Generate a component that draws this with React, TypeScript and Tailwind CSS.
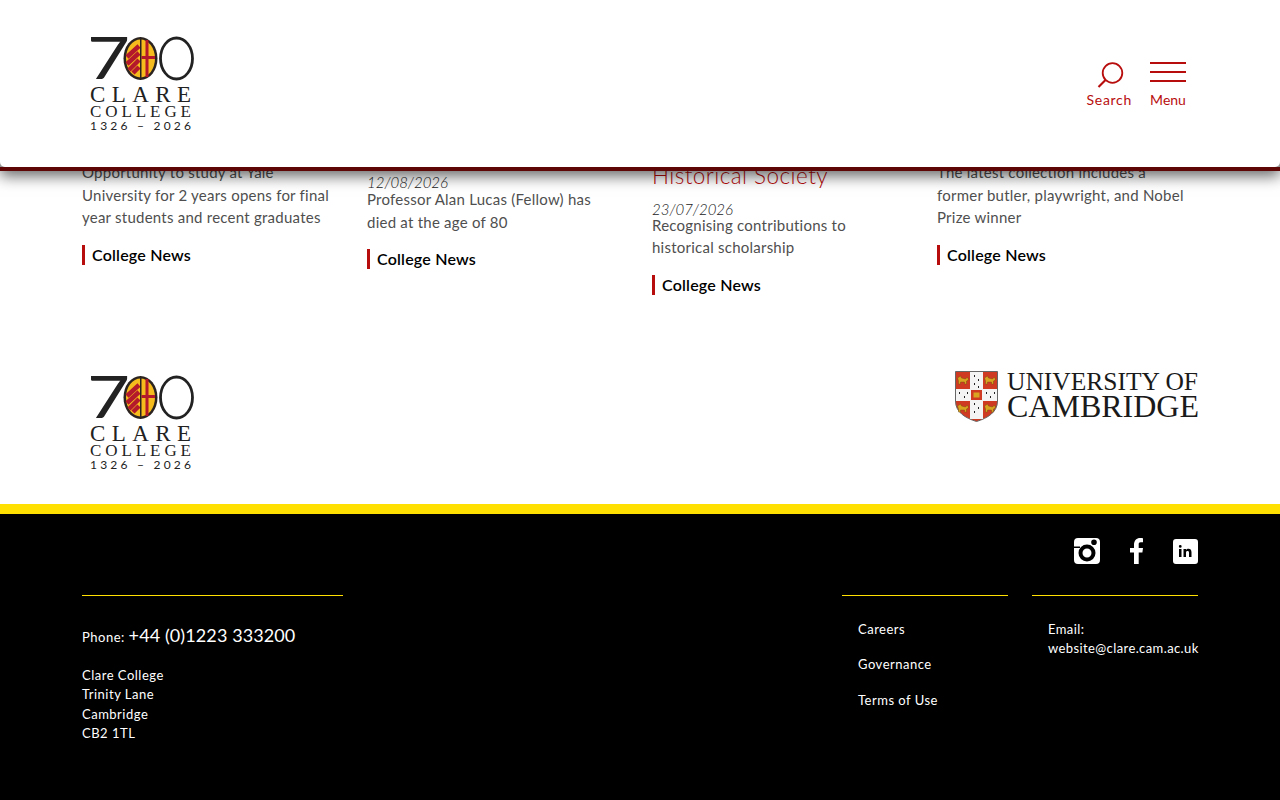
import React from 'react';

const sans = { fontFamily: '"Lato", "Open Sans", sans-serif' };

const news = [
  { title: '', date: '', text: ['Opportunity to study at Yale', 'University for 2 years opens for final', 'year students and recent graduates'], top: 'pt-[162px]' },
  { title: '', date: '12/08/2026', text: ['Professor Alan Lucas (Fellow) has', 'died at the age of 80'], top: 'pt-[175px]' },
  { title: 'Historical Society', date: '23/07/2026', text: ['Recognising contributions to', 'historical scholarship'], top: 'pt-[161px]' },
  { title: '', date: '', text: ['The latest collection includes a', 'former butler, playwright, and Nobel', 'Prize winner'], top: 'pt-[162px]' },
];

const ClareLogo: React.FC = () => (
  <svg width="104" height="94" viewBox="0 0 104 94" className="overflow-visible">
    <text x="0" y="41.500" fontSize="58" fontFamily="Lato" fontWeight="400" fill="#222" transform="translate(-3 0) scale(1.28 1)">7</text>
    <ellipse cx="86.500" cy="21.500" rx="16" ry="20.500" fill="none" stroke="#222" strokeWidth="2.800" />
    <ellipse cx="50.500" cy="21.500" rx="17" ry="21.500" fill="#2a2320" />
    <ellipse cx="50.500" cy="21.500" rx="14.500" ry="19" fill="#f6bb1d" />
    <path d="M37 20 L49 9 M37 27 L49 16 M39 33 L49 23 M43 36 L49 30" stroke="#b3182b" strokeWidth="4.500" fill="none" />
    <rect x="50" y="2" width="1.500" height="39" fill="#2a2320" />
    <rect x="55.500" y="3" width="3" height="37" fill="#b3182b" />
    <rect x="51.500" y="19" width="13.500" height="3" fill="#b3182b" />
    <text x="0" y="65" fontSize="23" fontFamily="Liberation Serif" fill="#222" textLength="101" lengthAdjust="spacing">CLARE</text>
    <text x="0" y="80" fontSize="17" fontFamily="Liberation Serif" fill="#222" textLength="101" lengthAdjust="spacing">COLLEGE</text>
    <text x="0" y="93" fontSize="12" fontFamily="Lato" fontWeight="400" fill="#222" textLength="101" lengthAdjust="spacing">1326 – 2026</text>
  </svg>
);

const lion = 'M1 3 L4 1 L5 3 L9 4 L11 2 L12 5 L10 6 L10 9 L8 9 L8 7 L4 7 L4 9 L2 9 L2 6 Z';

const CambridgeLogo: React.FC = () => (
  <div className="flex items-start gap-[9px]">
    <svg width="43" height="51" viewBox="0 0 43 51">
      <path d="M0.500 0.500 H42.500 V30 C42.500 41 33 47 21.500 50.500 C10 47 0.500 41 0.500 30Z" fill="#cf3a22" stroke="#666" />
      <rect x="15" y="1" width="13" height="47" fill="#f4f4f4" />
      <rect x="1" y="18" width="41" height="12" fill="#f4f4f4" />
      <path d={lion} fill="#d9a520" stroke="#6b4a10" strokeWidth="0.400" transform="translate(1.500 4)" />
      <path d={lion} fill="#d9a520" stroke="#6b4a10" strokeWidth="0.400" transform="translate(28.500 4)" />
      <path d={lion} fill="#d9a520" stroke="#6b4a10" strokeWidth="0.400" transform="translate(1.500 32)" />
      <path d={lion} fill="#d9a520" stroke="#6b4a10" strokeWidth="0.400" transform="translate(28.500 32)" />
      <rect x="16" y="19" width="11" height="10" fill="#cf3a22" />
      <rect x="18.500" y="21.500" width="6" height="5" fill="#d9a520" />
      <path d="M19 4h1v2h-1zM23 8h1v2h-1zM19 12h1v2h-1zM23 15h1v2h-1zM4 21h1v2H4zM9 25h1v2H9zM12 21h1v2h-1zM31 21h1v2h-1zM35 25h1v2h-1zM39 21h1v2h-1zM19 32h1v2h-1zM23 36h1v2h-1zM19 40h1v2h-1z" fill="#222" />
    </svg>
    <div className="text-[#1a1a1a]" style={{ fontFamily: '"Liberation Serif", serif' }}>
      <div className="whitespace-nowrap text-[25.5px] leading-[22px]">UNIVERSITY OF</div>
      <div className="whitespace-nowrap text-[32px] leading-[26px]">CAMBRIDGE</div>
    </div>
  </div>
);

const App: React.FC = () => {
  return (
    <div className="relative h-[800px] w-[1280px] overflow-hidden bg-white" style={sans}>
      {/* Fixed header */}
      <header className="absolute left-0 right-0 top-0 z-10 bg-[#999] shadow-[0_5px_14px_rgba(0,0,0,0.6)]">
        <div className="flex h-[167px] items-start justify-between rounded-b-[5px] bg-white pl-[90px] pr-[94px] pt-[37px]">
          <ClareLogo />
          <div className="mt-[25px] flex gap-[18px] text-sm text-[#b80d0d]">
            <div className="flex flex-col items-center">
              <svg width="27" height="27" viewBox="0 0 27 27" fill="none" stroke="#b80d0d" className="ml-[2px]">
                <circle cx="15.500" cy="11" r="9.800" strokeWidth="1.800" />
                <path d="M8.500 18 L1.500 25" strokeWidth="2.200" />
              </svg>
              <span className="mt-px leading-5 tracking-[0.7px]">Search</span>
            </div>
            <div className="flex flex-col items-center">
              <div className="flex h-[20px] w-[36px] flex-col justify-between">
                <div className="h-[2px] bg-[#b80d0d]" />
                <div className="h-[2px] bg-[#b80d0d]" />
                <div className="h-[2px] bg-[#b80d0d]" />
              </div>
              <span className="mt-[8px] leading-5">Menu</span>
            </div>
          </div>
        </div>
        <div className="h-[4px] bg-[#5e0505]" />
      </header>

      {/* News row */}
      <section className="grid h-[339px] grid-cols-4 gap-[24px] px-[82px]">
        {news.map((item) => (
          <div key={item.text[0]} className={item.top}>
            {item.title && <h3 className="text-[22.5px] font-light leading-[30px] tracking-[0.45px] text-[#b80d0d]">{item.title}</h3>}
            {item.date && <div className={`text-[15px] font-light italic leading-[14px] text-[#222] ${item.title ? '-mb-[2.5px] mt-[11px]' : ''}`}>{item.date}</div>}
            <p className="-mt-px text-[15px] leading-[22.6px] tracking-[0.24px] text-[#4f4f4f]">
              {item.text.map((line) => (
                <span key={line} className="block whitespace-nowrap">{line}</span>
              ))}
            </p>
            <div className="mt-[16px] border-l-[3px] border-[#b80d0d] pl-[7px] text-[16px] font-semibold leading-[20px] tracking-[0.2px] text-black">College News</div>
          </div>
        ))}
      </section>

      {/* Logos */}
      <section className="flex h-[165px] items-start justify-between pl-[90px] pr-[81px] pt-[37px]">
        <ClareLogo />
        <div className="-mt-[5px]">
          <CambridgeLogo />
        </div>
      </section>

      {/* Footer */}
      <footer className="h-[296px] border-t-[10px] border-[#ffe000] bg-black px-[82px] pt-[24px] text-white">
        <div className="flex h-[26px] items-center justify-end gap-[26px]">
          <svg width="26" height="26" viewBox="0 0 26 26">
            <path fillRule="evenodd" d="M4 0H22A4 4 0 0 1 26 4V22A4 4 0 0 1 22 26H4A4 4 0 0 1 0 22V4A4 4 0 0 1 4 0ZM0 8.500V10H6V8.500ZM13 6.500A8.500 8.500 0 1 0 13 23.500A8.500 8.500 0 1 0 13 6.500ZM13 10.500A4.500 4.500 0 1 1 13 19.500A4.500 4.500 0 1 1 13 10.500ZM20 1.500A2.800 2.800 0 1 0 20 7.100A2.800 2.800 0 1 0 20 1.500Z" fill="#fff" />
          </svg>
          <svg width="21" height="26" viewBox="0 0 21 26">
            <path d="M8 26V14.500H4V10H8V6.800C8 2.500 10.500 0 14.200 0C15.500 0 16.600 0.100 17 0.200V4.300H14.800C13 4.300 12.700 5.200 12.700 6.500V10H17L16.400 14.500H12.700V26Z" fill="#fff" />
          </svg>
          <svg width="25" height="25" viewBox="0 0 25 25">
            <path fillRule="evenodd" d="M3 0H22A3 3 0 0 1 25 3V22A3 3 0 0 1 22 25H3A3 3 0 0 1 0 22V3A3 3 0 0 1 3 0ZM6 10V18H8.500V10ZM7.250 6A1.400 1.400 0 1 0 7.250 8.800A1.400 1.400 0 1 0 7.250 6ZM10.500 10V18H13V13.800C13 12.500 13.500 11.900 14.500 11.900C15.500 11.900 16 12.500 16 13.800V18H18.500V13.200C18.500 10.900 17.300 9.800 15.600 9.800C14.400 9.800 13.500 10.300 13 11.100V10Z" fill="#fff" />
          </svg>
        </div>

        <div className="mt-[31px] flex justify-between text-[13px] tracking-[0.5px]">
          <div className="w-[261px] border-t border-[#ffe000] pt-[24px]">
            <div className="flex items-baseline leading-[30px]">
              <span>Phone:&nbsp;</span>
              <span className="text-[18px] tracking-[0.1px]">+44 (0)1223 333200</span>
            </div>
            <div className="mt-[14px] leading-[19.4px]">
              <div>Clare College</div>
              <div>Trinity Lane</div>
              <div>Cambridge</div>
              <div>CB2 1TL</div>
            </div>
          </div>
          <div className="flex gap-[24px]">
            <div className="w-[166px] border-t border-[#ffe000] pl-[16px] pt-[24px]">
              <div className="leading-[19px]">Careers</div>
              <div className="mt-[16px] leading-[19px]">Governance</div>
              <div className="mt-[17px] leading-[19px]">Terms of Use</div>
            </div>
            <div className="w-[166px] border-t border-[#ffe000] pl-[16px] pt-[24px] leading-[19px] tracking-[0.4px]">
              <div>Email:</div>
              <div className="whitespace-nowrap">website@clare.cam.ac.uk</div>
            </div>
          </div>
        </div>
      </footer>
    </div>
  );
};

export default App;
